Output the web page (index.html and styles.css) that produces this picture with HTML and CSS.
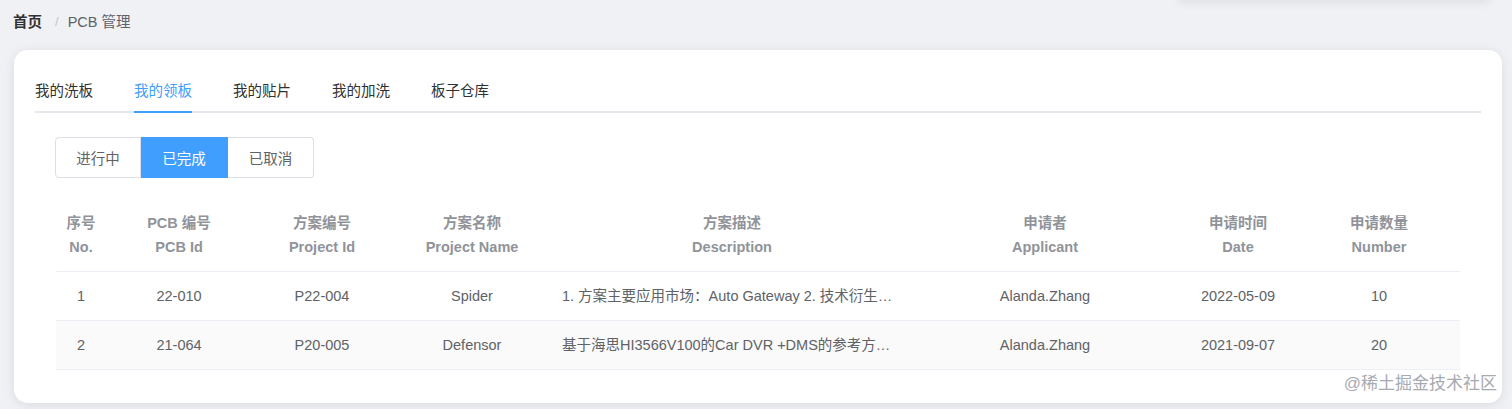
FILE: index.html
```html
<!DOCTYPE html>
<html lang="zh-CN">
<head>
  <meta charset="UTF-8" />
  <meta name="viewport" content="width=device-width, initial-scale=1" />
  <title>PCB 管理</title>
  <link rel="stylesheet" href="styles.css">
</head>
<body>
  <div class="top-shadow"></div>
  <nav class="breadcrumb">
    <span class="crumb home">首页</span>
    <span class="sep">/</span>
    <span class="crumb">PCB 管理</span>
  </nav>

  <section class="card">
    <div class="tabs">
      <div class="tab">我的洗板</div>
      <div class="tab active">我的领板</div>
      <div class="tab">我的贴片</div>
      <div class="tab">我的加洗</div>
      <div class="tab">板子仓库</div>
    </div>

    <div class="panel">
      <div class="radio-group">
        <button class="radio">进行中</button>
        <button class="radio checked">已完成</button>
        <button class="radio">已取消</button>
      </div>

      <table class="grid">
        <colgroup>
          <col class="c-no">
          <col class="c-pcb">
          <col class="c-pid">
          <col class="c-name">
          <col class="c-desc">
          <col class="c-user">
          <col class="c-date">
          <col class="c-num">
        </colgroup>
        <thead>
          <tr>
            <th>序号<br>No.</th>
            <th>PCB 编号<br>PCB Id</th>
            <th>方案编号<br>Project Id</th>
            <th>方案名称<br>Project Name</th>
            <th>方案描述<br>Description</th>
            <th>申请者<br>Applicant</th>
            <th>申请时间<br>Date</th>
            <th>申请数量<br>Number</th>
          </tr>
        </thead>
        <tbody>
          <tr>
            <td>1</td>
            <td>22-010</td>
            <td>P22-004</td>
            <td>Spider</td>
            <td class="desc"><div class="ellipsis">1. 方案主要应用市场：Auto Gateway 2. 技术衍生方向：车载网关及域控制器</div></td>
            <td>Alanda.Zhang</td>
            <td>2022-05-09</td>
            <td>10</td>
          </tr>
          <tr class="stripe">
            <td>2</td>
            <td>21-064</td>
            <td>P20-005</td>
            <td>Defensor</td>
            <td class="desc"><div class="ellipsis">基于海思HI3566V100的Car DVR +DMS的参考方案设计</div></td>
            <td>Alanda.Zhang</td>
            <td>2021-09-07</td>
            <td>20</td>
          </tr>
        </tbody>
      </table>
    </div>
  </section>

  <div class="watermark">@稀土掘金技术社区</div>
</body>
</html>
```

FILE: styles.css
```css
:root {
  --bg: #f0f1f5;
  --white: #ffffff;
  --text: #303133;
  --regular: #606266;
  --secondary: #909399;
  --placeholder: #c0c4cc;
  --border: #e4e7ed;
  --border-light: #ebeef5;
  --stripe: #fafafa;
  --blue: #409eff;
}

body {
  margin: 0;
  background: var(--bg);
  font-family: "Liberation Sans", "Noto Sans CJK SC", sans-serif;
  font-size: 14.5px;
  color: var(--regular);
  position: relative;
  height: 409px;
  overflow: hidden;
}

/* faint shadow of the header dropdown, top right */
.top-shadow {
  position: absolute;
  top: -30px;
  left: 1178px;
  width: 312px;
  height: 30px;
  box-shadow: 0 3px 10px rgba(0, 0, 0, 0.07);
  background: var(--bg);
}

.breadcrumb {
  display: flex;
  align-items: center;
  padding: 13px 13px 0;
  height: 18px;
  line-height: 18px;
}

.crumb {
  color: var(--regular);
}

.crumb.home {
  color: var(--text);
  font-weight: bold;
}

.sep {
  color: var(--placeholder);
  margin: 0 9px 0 13px;
  font-size: 13px;
}

.card {
  margin: 19px 10px 0 14px;
  background: var(--white);
  border-radius: 14px;
  box-shadow: 0 2px 12px rgba(0, 0, 0, 0.09);
  padding: 21px 21px 33px;
}

.tabs {
  display: flex;
  height: 40px;
  line-height: 40px;
  border-bottom: 2px solid var(--border);
}

.tab {
  padding: 0 20.5px;
  color: var(--text);
  position: relative;
}

.tab:first-child {
  padding-left: 0;
}

.tab.active {
  color: var(--blue);
}

.tab.active::after {
  content: "";
  position: absolute;
  left: 20.5px;
  right: 20.5px;
  bottom: -2px;
  height: 2px;
  background: var(--blue);
}

.panel {
  padding: 24px 21px 0 21px;
}

.radio-group {
  display: flex;
  height: 41px;
  margin-left: -1px;
}

.radio {
  font-family: inherit;
  font-size: 14.5px;
  color: var(--regular);
  background: var(--white);
  border: 1px solid #dcdfe6;
  border-left: none;
  padding: 0;
  white-space: nowrap;
  height: 41px;
  width: 86px;
  margin: 0;
}

.radio:first-child {
  border-left: 1px solid #dcdfe6;
  border-radius: 4px 0 0 4px;
}

.radio:last-child {
  border-radius: 0 4px 4px 0;
}

.radio.checked {
  background: var(--blue);
  border-color: var(--blue);
  color: var(--white);
  width: 87px;
}

.grid {
  margin-top: 21px;
  width: 100%;
  table-layout: fixed;
  border-collapse: collapse;
}

.c-no { width: 50px; }
.c-pcb { width: 146px; }
.c-pid { width: 140px; }
.c-name { width: 160px; }
.c-desc { width: 360px; }
.c-user { width: 266px; }
.c-date { width: 120px; }
.c-num { width: 162px; }

.grid th {
  color: var(--secondary);
  font-weight: bold;
  line-height: 24px;
  padding: 12px 0;
  text-align: center;
  border-bottom: 1px solid var(--border-light);
}

.grid td {
  text-align: center;
  line-height: 22px;
  padding: 13px 0;
  border-bottom: 1px solid var(--border-light);
}

.grid td.desc {
  text-align: left;
  padding: 13px 10px 13px 10px;
}

.ellipsis {
  white-space: nowrap;
  overflow: hidden;
  text-overflow: ellipsis;
}

.stripe td {
  background: var(--stripe);
}

.watermark {
  position: absolute;
  right: 15px;
  bottom: 15px;
  font-size: 17px;
  color: #a7aab0;
  text-shadow: 0 0 2px #ffffff, 0 0 2px #ffffff;
}
```
